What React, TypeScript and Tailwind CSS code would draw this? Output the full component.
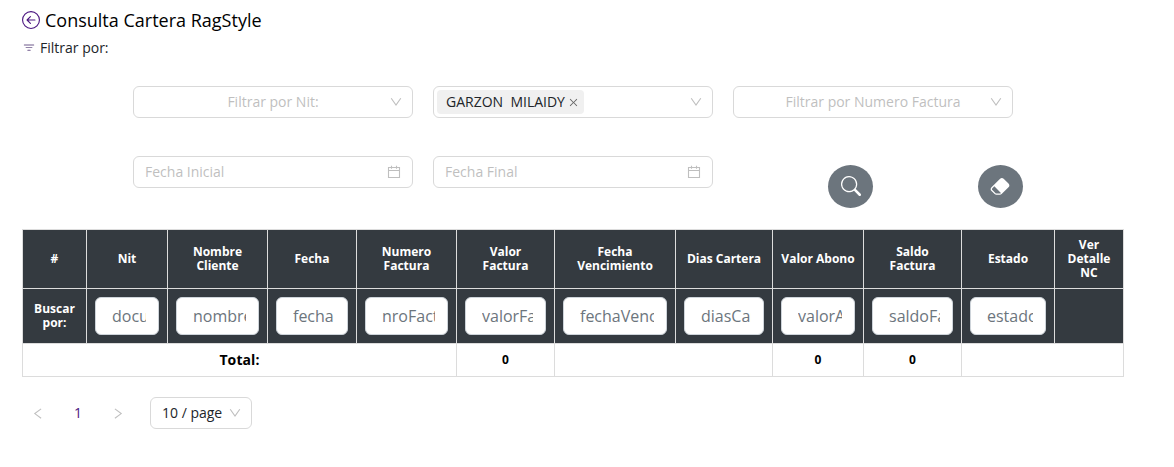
import { AiOutlineClose } from "react-icons/ai";
import { BsArrowLeftCircle, BsEraserFill, BsFilter, BsSearch } from "react-icons/bs";

const columns = [
  { title: "#", field: null },
  { title: "Nit", field: "documento" },
  { title: "Nombre Cliente", field: "nombreCliente" },
  { title: "Fecha", field: "fecha" },
  { title: "Numero Factura", field: "nroFactura" },
  { title: "Valor Factura", field: "valorFactura" },
  { title: "Fecha Vencimiento", field: "fechaVencimiento" },
  { title: "Dias Cartera", field: "diasCartera" },
  { title: "Valor Abono", field: "valorAbono" },
  { title: "Saldo Factura", field: "saldoFactura" },
  { title: "Estado", field: "estado" },
  { title: "Ver Detalle NC", field: null },
];

const totals = [
  { span: "col-span-5", value: "Total:", size: "text-[14px] tracking-[0.1px]" },
  { span: "col-span-1", value: "0", size: "text-[12px]" },
  { span: "col-span-2", value: "", size: "text-[12px]" },
  { span: "col-span-1", value: "0", size: "text-[12px]" },
  { span: "col-span-1", value: "0", size: "text-[12px]" },
  { span: "col-span-2", value: "", size: "text-[12px]" },
];

const box = "flex h-8 items-center rounded-md border border-[#d9d9d9] bg-white";

function Chevron() {
  return (
    <svg viewBox="0 0 12 12" className="size-3 shrink-0 text-[#bfbfbf]" fill="none" stroke="currentColor" strokeWidth="1.1">
      <path d="M1.2 2.3 6 9 10.8 2.3" />
    </svg>
  );
}

function PageArrow({ next = false }: { next?: boolean }) {
  return (
    <svg viewBox="0 0 12 12" className="size-3 text-[#bfbfbf]" fill="none" stroke="currentColor" strokeWidth="1.1">
      <path d={next ? "M2.9 1.9 9.2 6.6 2.9 11.3" : "M9.1 1.9 2.8 6.6 9.1 11.3"} />
    </svg>
  );
}

function Calendar() {
  return (
    <svg viewBox="0 0 14 14" className="size-[14px] shrink-0 text-[#bfbfbf]" fill="none" stroke="currentColor" strokeWidth="1.1">
      <path d="M1.5 2.5h11v10h-11zM1.5 5.5h11M4.5 0.8v3M9.5 0.8v3" />
    </svg>
  );
}

function Select({ placeholder }: { placeholder: string }) {
  return (
    <div className={`${box} pr-[10px] pl-[11px]`}>
      <span className="flex-1 pl-[11px] text-center text-[#bfbfbf]">{placeholder}</span>
      <Chevron />
    </div>
  );
}

function DateField({ placeholder }: { placeholder: string }) {
  return (
    <div className={`${box} justify-between px-[11px]`}>
      <span className="text-[#bfbfbf]">{placeholder}</span>
      <Calendar />
    </div>
  );
}

export default function App() {
  return (
    <main className="h-[467px] overflow-hidden bg-white pl-[22px] font-['Open_Sans',sans-serif] text-[14px] leading-[22px] text-[#212529]">
      <h1 className="flex h-10 items-center gap-[5px] text-[18px] text-black">
        <BsArrowLeftCircle className="size-[18px] text-[#4b1680]" />
        Consulta Cartera RagStyle
      </h1>
      <div className="flex h-4 items-center gap-1">
        <BsFilter className="size-[14px] text-[#6f5a8c]" />
        <span>Filtrar por:</span>
      </div>

      <section className="mt-[30px] ml-[111px] grid h-[143px] w-[880px] grid-cols-[280px_280px_280px] grid-rows-[32px_32px] gap-x-5 gap-y-[38px]">
        <Select placeholder="Filtrar por Nit:" />
        <div className={`${box} justify-between pr-[10px] pl-[3px]`}>
          <span className="flex h-6 items-center gap-[3px] rounded bg-[#f0f0f0] pr-[5px] pl-[9px] whitespace-pre text-[#212529]">
            GARZON  MILAIDY
            <AiOutlineClose className="size-[11px] text-[#666]" />
          </span>
          <Chevron />
        </div>
        <Select placeholder="Filtrar por Numero Factura" />
        <DateField placeholder="Fecha Inicial" />
        <DateField placeholder="Fecha Final" />
        <div className="flex gap-[105px] pt-[9px] pl-[95px]">
          <button className="flex h-[43px] w-[45px] shrink-0 items-center justify-center rounded-[50%] bg-[#6c757d] pb-[2px] text-white">
            <BsSearch className="size-5" />
          </button>
          <button className="flex h-[43px] w-[45px] shrink-0 items-center justify-center rounded-[50%] bg-[#6c757d] pr-px pb-[2px] text-white">
            <BsEraserFill className="size-5" />
          </button>
        </div>
      </section>

      <section className="grid w-[1102px] grid-cols-[63px_80px_99px_88px_99px_97px_120px_96px_90px_97px_92px_68px] grid-rows-[58px_54px_32px] gap-px bg-[#dcdcdc] p-px text-center font-bold">
        {columns.map((c) => (
          <div key={c.title} className="flex items-center justify-center bg-[#343a40] px-2 text-[12px] leading-[14px] text-white">
            <span className={c.title === "Dias Cartera" || c.title === "Valor Abono" ? "whitespace-nowrap" : "max-w-[78px]"}>{c.title}</span>
          </div>
        ))}
        {columns.map((c, i) => (
          <div key={c.title} className="flex items-center justify-center bg-[#343a40] px-2 text-[12px] leading-[14px] text-white">
            {i === 0 && "Buscar por:"}
            {c.field && (
              <input
                placeholder={c.field}
                className="h-[38px] w-full min-w-0 rounded-md border border-[#ced4da] bg-white pr-3 pl-4 text-[16px] leading-6 font-normal text-[#495057] placeholder:text-[#6c757d]"
              />
            )}
          </div>
        ))}
        {totals.map((t, i) => (
          <div key={i} className={`flex items-center justify-center bg-white text-black ${t.span} ${t.size}`}>
            {t.value}
          </div>
        ))}
      </section>

      <nav className="mt-5 flex h-8 items-center">
        <span className="flex w-8 justify-center"><PageArrow /></span>
        <span className="mx-2 w-8 text-center text-[#4b1680]">1</span>
        <span className="flex w-8 justify-center"><PageArrow next /></span>
        <div className={`${box} ml-4 w-[102px] justify-between pr-[10px] pl-[11px]`}>
          <span>10 / page</span>
          <Chevron />
        </div>
      </nav>
    </main>
  );
}
